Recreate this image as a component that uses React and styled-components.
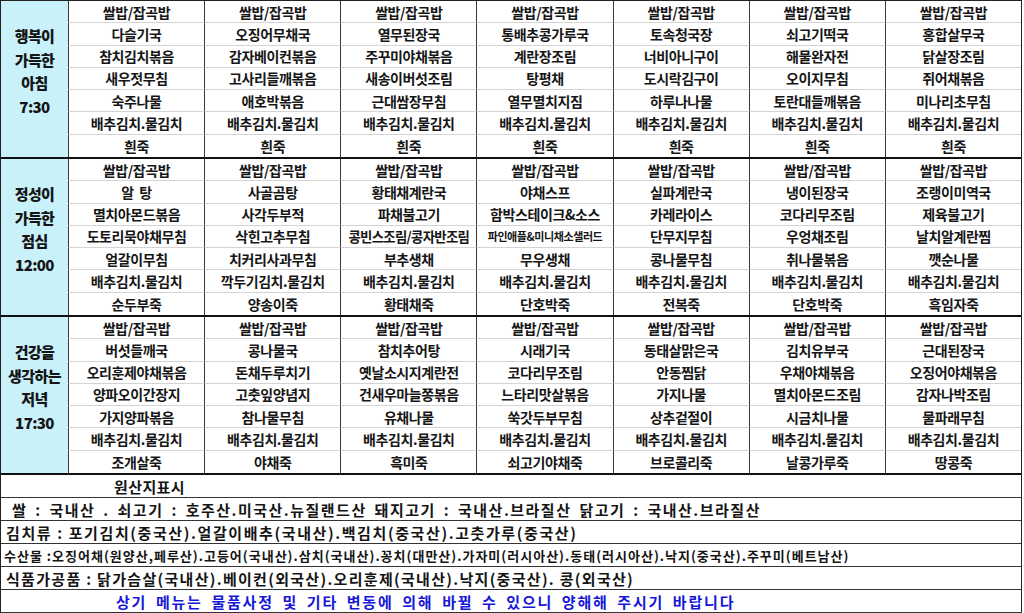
import React from "react";
import styled, { createGlobalStyle } from "styled-components";

const GlobalStyle = createGlobalStyle`
  html, body {
    margin: 0;
    padding: 0;
    background: #ffffff;
  }
  body {
    font-family: "Noto Sans CJK KR", "Noto Sans", sans-serif;
    color: #111;
  }
`;

const meals = [
  {
    label: ["행복이", "가득한", "아침", "7:30"],
    days: [
      ["쌀밥/잡곡밥", "다슬기국", "참치김치볶음", "새우젓무침", "숙주나물", "배추김치.물김치", "흰죽"],
      ["쌀밥/잡곡밥", "오징어무채국", "감자베이컨볶음", "고사리들깨볶음", "애호박볶음", "배추김치.물김치", "흰죽"],
      ["쌀밥/잡곡밥", "열무된장국", "주꾸미야채볶음", "새송이버섯조림", "근대쌈장무침", "배추김치.물김치", "흰죽"],
      ["쌀밥/잡곡밥", "통배추콩가루국", "계란장조림", "탕평채", "열무멸치지짐", "배추김치.물김치", "흰죽"],
      ["쌀밥/잡곡밥", "토속청국장", "너비아니구이", "도시락김구이", "하루나나물", "배추김치.물김치", "흰죽"],
      ["쌀밥/잡곡밥", "쇠고기떡국", "해물완자전", "오이지무침", "토란대들깨볶음", "배추김치.물김치", "흰죽"],
      ["쌀밥/잡곡밥", "홍합살무국", "닭살장조림", "쥐어채볶음", "미나리초무침", "배추김치.물김치", "흰죽"],
    ],
  },
  {
    label: ["정성이", "가득한", "점심", "12:00"],
    days: [
      ["쌀밥/잡곡밥", "알  탕", "멸치아몬드볶음", "도토리묵야채무침", "얼갈이무침", "배추김치.물김치", "순두부죽"],
      ["쌀밥/잡곡밥", "사골곰탕", "사각두부적", "삭힌고추무침", "치커리사과무침", "깍두기김치.물김치", "양송이죽"],
      ["쌀밥/잡곡밥", "황태채계란국", "파채불고기", "콩빈스조림/콩자반조림", "부추생채", "배추김치.물김치", "황태채죽"],
      ["쌀밥/잡곡밥", "야채스프", "함박스테이크&소스", "파인애플&미니채소샐러드", "무우생채", "배추김치.물김치", "단호박죽"],
      ["쌀밥/잡곡밥", "실파계란국", "카레라이스", "단무지무침", "콩나물무침", "배추김치.물김치", "전복죽"],
      ["쌀밥/잡곡밥", "냉이된장국", "코다리무조림", "우엉채조림", "취나물볶음", "배추김치.물김치", "단호박죽"],
      ["쌀밥/잡곡밥", "조랭이미역국", "제육불고기", "날치알계란찜", "깻순나물", "배추김치.물김치", "흑임자죽"],
    ],
  },
  {
    label: ["건강을", "생각하는", "저녁", "17:30"],
    days: [
      ["쌀밥/잡곡밥", "버섯들깨국", "오리훈제야채볶음", "양파오이간장지", "가지양파볶음", "배추김치.물김치", "조개살죽"],
      ["쌀밥/잡곡밥", "콩나물국", "돈채두루치기", "고춧잎양념지", "참나물무침", "배추김치.물김치", "야채죽"],
      ["쌀밥/잡곡밥", "참치추어탕", "옛날소시지계란전", "건새우마늘쫑볶음", "유채나물", "배추김치.물김치", "흑미죽"],
      ["쌀밥/잡곡밥", "시래기국", "코다리무조림", "느타리맛살볶음", "쑥갓두부무침", "배추김치.물김치", "쇠고기야채죽"],
      ["쌀밥/잡곡밥", "동태살맑은국", "안동찜닭", "가지나물", "상추겉절이", "배추김치.물김치", "브로콜리죽"],
      ["쌀밥/잡곡밥", "김치유부국", "우채야채볶음", "멸치아몬드조림", "시금치나물", "배추김치.물김치", "날콩가루죽"],
      ["쌀밥/잡곡밥", "근대된장국", "오징어야채볶음", "감자나박조림", "물파래무침", "배추김치.물김치", "땅콩죽"],
    ],
  },
];

// long names are shrunk to fit the cell, like the spreadsheet does
const sizeFor = (text) => {
  if (text.length >= 12) return { size: "11px", spacing: "-0.4px" };
  if (text.length >= 11) return { size: "13.4px", spacing: "-0.7px" };
  return { size: "14px", spacing: "-0.4px" };
};

const Sheet = styled.div`
  width: 1022px;
  border-top: 1px solid #222;
  border-left: 1px solid #222;
  border-right: 1px solid #222;
  box-sizing: border-box;
`;

const MealSection = styled.div`
  display: grid;
  grid-template-columns: 67px repeat(7, 1fr);
  grid-template-rows: repeat(7, 1fr);
  grid-auto-flow: column;
  height: 158px;
  border-bottom: 2px solid #111;
  box-sizing: border-box;
`;

const MealLabel = styled.div`
  grid-row: 1 / -1;
  background: #c8f1fa;
  display: flex;
  flex-direction: column;
  align-items: center;
  justify-content: center;
  padding-bottom: 16px;
  font-weight: 900;
  font-size: 15px;
  line-height: 23.5px;
  letter-spacing: -0.6px;
  color: #151515;
`;

const Item = styled.div`
  display: flex;
  align-items: center;
  justify-content: center;
  border-left: 1px solid #3a3a3a;
  border-bottom: ${(p) => (p.$last ? "none" : "1px solid #d4d4d4")};
  font-size: ${(p) => p.$size};
  font-weight: 600;
  letter-spacing: ${(p) => p.$spacing};
  white-space: pre;
  overflow: hidden;
  color: #161616;
`;

const Footer = styled.div`
  display: flex;
  flex-direction: column;
`;

const NoteRow = styled.div`
  height: 23px;
  box-sizing: border-box;
  border-bottom: 1px solid #333;
  display: flex;
  align-items: center;
  padding-left: ${(p) => p.$indent || "4px"};
  font-size: ${(p) => p.$size || "15px"};
  font-weight: 700;
  letter-spacing: ${(p) => p.$spacing || "1.2px"};
  word-spacing: ${(p) => p.$gap || "0px"};
  color: ${(p) => p.$color || "#151515"};
  white-space: pre;
`;

export default function App() {
  return (
    <>
      <GlobalStyle />
      <Sheet>
        {meals.map((meal) => (
          <MealSection key={meal.label[2]}>
            <MealLabel>
              {meal.label.map((line) => (
                <span key={line}>{line}</span>
              ))}
            </MealLabel>
            {meal.days.map((day, d) =>
              day.map((dish, i) => {
                const fit = sizeFor(dish);
                return (
                  <Item
                    key={`${d}-${i}`}
                    $last={i === day.length - 1}
                    $size={fit.size}
                    $spacing={fit.spacing}
                  >
                    {dish}
                  </Item>
                );
              })
            )}
          </MealSection>
        ))}
        <Footer>
          <NoteRow $indent="113px" $spacing="0.4px">원산지표시</NoteRow>
          <NoteRow $indent="11px" $spacing="1.5px" $gap="3px">
            쌀 : 국내산 . 쇠고기 : 호주산.미국산.뉴질랜드산 돼지고기 : 국내산.브라질산 닭고기 : 국내산.브라질산
          </NoteRow>
          <NoteRow $indent="5px" $spacing="1.6px">
            김치류 : 포기김치(중국산).얼갈이배추(국내산).백김치(중국산).고춧가루(중국산)
          </NoteRow>
          <NoteRow $indent="3px" $size="13px" $spacing="1px">
            수산물 :오징어채(원양산,페루산).고등어(국내산).삼치(국내산).꽁치(대만산).가자미(러시아산).동태(러시아산).낙지(중국산).주꾸미(베트남산)
          </NoteRow>
          <NoteRow $indent="5px" $spacing="1.3px">
            식품가공품 : 닭가슴살(국내산).베이컨(외국산).오리훈제(국내산).낙지(중국산). 콩(외국산)
          </NoteRow>
          <NoteRow $indent="115px" $color="#1717d8" $spacing="1.8px" $gap="3.5px">
            상기 메뉴는 물품사정 및 기타 변동에 의해 바뀔 수 있으니 양해해 주시기 바랍니다
          </NoteRow>
        </Footer>
      </Sheet>
    </>
  );
}
